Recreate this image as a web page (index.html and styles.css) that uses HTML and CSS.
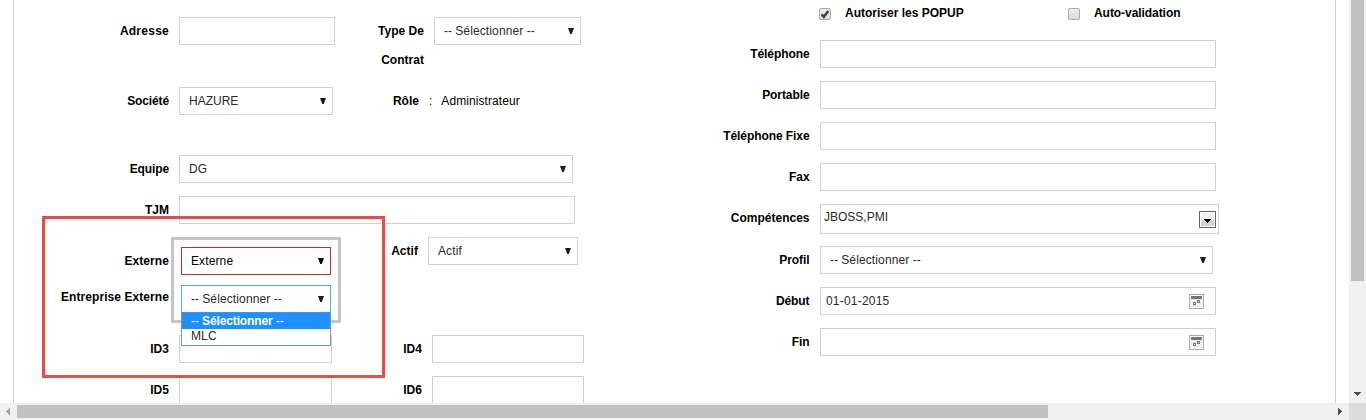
FILE: index.html
```html
<!DOCTYPE html>
<html lang="fr">
<head>
<meta charset="utf-8">
<title>Fiche utilisateur</title>
<link rel="stylesheet" href="styles.css">
</head>
<body>
<div class="window">
  <main class="viewport">
    <div class="panel">
      <section class="col-left">
        <div class="row row-adresse">
          <label class="label wide">Adresse</label><div class="field w156"></div>
          <label class="label second l-type">Type De<br>Contrat</label><div class="field select w147"><span><span class="dash">--</span> Sélectionner <span class="dash">--</span></span><i class="arrow"></i></div>
        </div>
        <div class="row row-societe">
          <label class="label tight">Société</label><div class="field select caps w154"><span>HAZURE</span><i class="arrow"></i></div>
          <label class="label second l-role">Rôle</label><span class="plain">:</span><span class="plain value">Administrateur</span>
        </div>
        <div class="row row-equipe">
          <label class="label tight">Equipe</label><div class="field select caps w394"><span>DG</span><i class="arrow"></i></div>
        </div>
        <div class="row row-tjm">
          <label class="label">TJM</label><div class="field w396"></div>
        </div>
        <div class="row row-externe">
          <div class="group-labels">
            <label class="label">Externe</label>
            <label class="label">Entreprise Externe</label>
          </div>
          <div class="group">
            <div class="field select invalid"><span>Externe</span><i class="arrow"></i></div>
            <div class="field select focus"><span><span class="dash">--</span> Sélectionner <span class="dash">--</span></span><i class="arrow"></i>
              <div class="menu">
                <div class="option active"><span class="dash">--</span> Sélectionner <span class="dash">--</span></div>
                <div class="option">MLC</div>
              </div>
            </div>
          </div>
          <label class="label l-actif">Actif</label><div class="field select w150"><span>Actif</span><i class="arrow"></i></div>
        </div>
        <div class="row row-id">
          <label class="label">ID3</label><div class="field w153"></div>
          <label class="label second l-id">ID4</label><div class="field w152"></div>
        </div>
        <div class="row row-id">
          <label class="label">ID5</label><div class="field w153"></div>
          <label class="label second l-id">ID6</label><div class="field w152"></div>
        </div>
      </section>
      <section class="col-right">
        <div class="checks">
          <div class="check"><i class="box"><svg width="10" height="10" viewBox="0 0 10 10"><path d="M1.6 5.4 L3.8 7.8 L8.3 2" fill="none" stroke="#404040" stroke-width="2.4"/></svg></i><span>Autoriser les POPUP</span></div>
          <div class="check"><i class="box"></i><span class="auto">Auto-validation</span></div>
        </div>
        <div class="row"><label class="label">Téléphone</label><div class="field w396"></div></div>
        <div class="row"><label class="label">Portable</label><div class="field w396"></div></div>
        <div class="row"><label class="label">Téléphone Fixe</label><div class="field w396"></div></div>
        <div class="row"><label class="label">Fax</label><div class="field w396"></div></div>
        <div class="row row-comp"><label class="label">Compétences</label><div class="field combo"><span>JBOSS,PMI</span><b class="combo-btn"><svg width="7" height="4" shape-rendering="crispEdges"><path d="M0 0h7v1H0zM1 1h5v1H1zM2 2h3v1H2zM3 3h1v1H3z"/></svg></b></div></div>
        <div class="row"><label class="label">Profil</label><div class="field select w393"><span><span class="dash">--</span> Sélectionner <span class="dash">--</span></span><i class="arrow"></i></div></div>
        <div class="row"><label class="label">Début</label><div class="field date w396"><span>01-01-2015</span>
          <svg class="cal" width="15" height="15" shape-rendering="crispEdges"><path fill="#aaa" d="M0 0h15v15H0z"/><path fill="#fff" d="M1 1h13v13H1z"/><path fill="#e3e3e3" d="M2 5h11v8H2z"/><path stroke="#fff" d="M2 6.5h11M2 8.5h11M2 10.500h11M3.500 5v8M7.500 5v8M9.500 5v8M11.500 5v8" stroke-opacity=".7"/><path fill="#777" d="M2 2h11v3H2zM4 8h3v3H4zM8 6h3v3H8z"/><path fill="#fff" d="M5 9h1v1H5zM9 7h1v1H9z"/></svg></div></div>
        <div class="row"><label class="label">Fin</label><div class="field date w396"><span></span>
          <svg class="cal" width="15" height="15" shape-rendering="crispEdges"><path fill="#aaa" d="M0 0h15v15H0z"/><path fill="#fff" d="M1 1h13v13H1z"/><path fill="#e3e3e3" d="M2 5h11v8H2z"/><path stroke="#fff" d="M2 6.5h11M2 8.5h11M2 10.500h11M3.500 5v8M7.500 5v8M9.500 5v8M11.500 5v8" stroke-opacity=".7"/><path fill="#777" d="M2 2h11v3H2zM4 8h3v3H4zM8 6h3v3H8z"/><path fill="#fff" d="M5 9h1v1H5zM9 7h1v1H9z"/></svg></div></div>
      </section>
    </div>
    <div class="highlight"></div>
  </main>
  <div class="vbar"><div class="vthumb"></div><svg width="7" height="4" shape-rendering="crispEdges" fill="#505050"><path d="M0 0h7v1H0zM1 1h5v1H1zM2 2h3v1H2zM3 3h1v1H3z"/></svg></div>
  <div class="hbar"><svg width="4" height="7" shape-rendering="crispEdges" fill="#a3a3a3"><path d="M3 0h1v7H3zM2 1h1v5H2zM1 2h1v3H1zM0 3h1v1H0z"/></svg><div class="hthumb"></div><svg width="4" height="7" shape-rendering="crispEdges" fill="#505050"><path d="M0 0h1v7H0zM1 1h1v5H1zM2 2h1v3H2zM3 3h1v1H3z"/></svg></div>
  <div class="corner"></div>
</div>
</body>
</html>
```
FILE: styles.css
```css
* { box-sizing: border-box; }
body {
  margin: 0;
  background: #fff;
  color: #000;
  font: 12px/28px "Liberation Sans", Arial, sans-serif;
  overflow: hidden;
}
.window {
  display: grid;
  grid-template: 403px 17px / 1349px 17px;
}
.viewport {
  position: relative;
  overflow: hidden;
  padding: 0 13px;
}
.panel {
  display: flex;
  height: 403px;
  border: solid #d0d0d0;
  border-width: 0 1px;
}
.col-left { flex: none; width: 687px; padding-top: 17px; }
.col-right { width: 620px; }
.row { display: flex; align-items: flex-start; }
.label {
  flex: none;
  width: 155px;
  margin-right: 10px;
  text-align: right;
  font-weight: bold;
  letter-spacing: 0.03px;
  white-space: nowrap;
}
.label.wide { letter-spacing: 0.25px; }
.label.tight { letter-spacing: -0.12px; }
.field {
  position: relative;
  flex: none;
  height: 28px;
  border: 1px solid #d0d0d0;
  background: #fff;
  line-height: 26px;
  color: #2a2a2a;
}
.select {
  display: flex;
  justify-content: space-between;
  align-items: center;
  padding: 0 6px 0 9px;
  letter-spacing: 0.12px;
}
.caps { letter-spacing: 0; }
.arrow {
  width: 6px;
  height: 6px;
  background: #1c1c1c;
  clip-path: polygon(0 0, 100% 0, 62% 100%, 38% 100%);
}
.w147 { width: 147px; }
.w150 { width: 150px; }
.w152 { width: 152px; }
.w153 { width: 153px; }
.w154 { width: 154px; }
.w156 { width: 156px; }
.w393 { width: 393px; }
.w394 { width: 394px; }
.w396 { width: 396px; }

.row-adresse { height: 70px; }
.l-type { width: 89px; line-height: 29px; }
.row-societe { height: 68px; }
.l-role { width: 86px; }
.value { margin-left: 9px; letter-spacing: 0.08px; }
.row-equipe, .row-tjm { height: 41px; }
.row-externe { height: 98px; }
.row-id { height: 41px; }
.l-id { width: 90px; }
.l-actif { width: 77px; }

.group-labels { width: 157px; padding-top: 10px; }
.group-labels .label { display: block; width: 155px; margin: 0 0 8px; letter-spacing: 0.07px; }
.group {
  display: flex;
  flex-direction: column;
  gap: 10px;
  width: 170px;
  height: 86px;
  padding: 7px;
  border: 3px solid #c4c4c4;
}
.invalid { border-color: #c82828; color: #000; }
.invalid .arrow { background: #000; }
.focus { border-color: #4fa9ea; }
.menu {
  position: absolute;
  z-index: 2;
  top: 26px;
  left: -1px;
  width: 150px;
  height: 34px;
  border: 1px solid #6f90d6;
  border-top-color: #3c96e8;
  background: #fff;
}
.option { height: 16px; padding-left: 9px; line-height: 15px; }
.option.active { background: #1e90ff; color: #fff; font-weight: bold; line-height: 17px; letter-spacing: -0.12px; }
.dash { font-weight: normal; letter-spacing: -0.1px; }

.checks { display: flex; height: 40px; padding: 0 0 0 118px; }
.check { display: flex; width: 249px; font-weight: bold; line-height: 26px; }
.auto { letter-spacing: -0.06px; }
.box {
  width: 12px;
  height: 12px;
  margin: 8px 14px 0 0;
  border: 1px solid #aaa;
  border-radius: 2px;
  background: linear-gradient(#ededed, #dcdcdc);
}
.box svg { display: block; }
.col-right .row { height: 41px; }
.col-right .label { width: 108.5px; margin-right: 10.5px; letter-spacing: -0.08px; }
.col-right .row-comp { height: 42px; }
.col-right .row-comp .label { letter-spacing: 0; }
.combo {
  display: flex;
  justify-content: space-between;
  width: 399px;
  height: 30px;
  padding: 0 2px 0 3px;
  line-height: 25px;
}
.combo-btn {
  display: flex;
  align-items: center;
  justify-content: center;
  width: 17px;
  height: 17px;
  margin-top: 6px;
  padding-top: 2px;
  border: 1px solid #666;
  box-shadow: inset 0 0 0 1px #fff;
  background: linear-gradient(#f2f2f2 50%, #d4d4d4 50%);
}
.date {
  display: flex;
  justify-content: space-between;
  align-items: center;
  padding: 0 11px 0 5px;
  letter-spacing: 0.2px;
}
.highlight {
  position: absolute;
  z-index: 3;
  left: 42px;
  top: 216px;
  width: 343px;
  height: 162px;
  border: 3px solid #e84c48;
}
.vbar {
  display: flex;
  flex-direction: column;
  justify-content: space-between;
  align-items: center;
  padding-bottom: 7px;
  background: #f0f0f0;
}
.vthumb { width: 13px; height: 281px; background: #c1c1c1; }
.hbar {
  display: flex;
  align-items: center;
  padding: 0 7px 0 6px;
  background: #f0f0f0;
}
.hthumb { width: 1031px; height: 13px; margin: 0 auto 0 7px; background: #c1c1c1; }
.corner { background: #dcdcdc; }
```
